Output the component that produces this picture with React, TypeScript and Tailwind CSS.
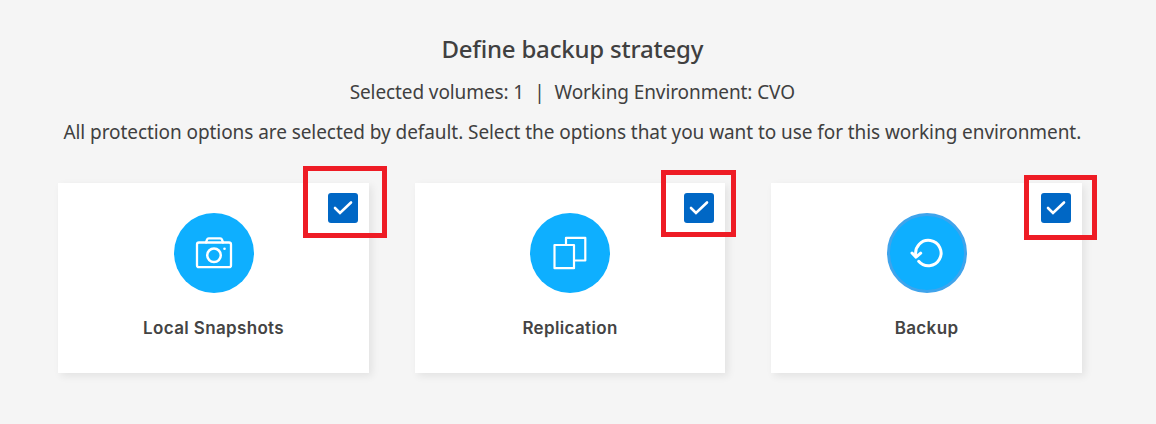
import type { ReactNode } from "react";

const CameraIcon = () => (
  <svg width="38" height="34" viewBox="0 0 38 34" fill="none" stroke="white" strokeWidth="2.300" strokeLinejoin="round" strokeLinecap="round">
    <rect x="2" y="6.500" width="34" height="24.700" rx="2" />
    <path d="M11 6.500l1-2.800c.3-.9.8-1.300 1.700-1.300h11.600c.9 0 1.400.4 1.700 1.300l1 2.800" />
    <circle cx="19" cy="19.300" r="6.800" strokeWidth="2.500" />
    <circle cx="29.500" cy="12.700" r="1.300" fill="white" stroke="none" />
  </svg>
);

const CopyIcon = () => (
  <svg width="34" height="34" viewBox="0 0 34 34" fill="none" stroke="white" strokeWidth="2.200" strokeLinejoin="round" strokeLinecap="round">
    <rect x="1.500" y="9" width="19.500" height="23.200" />
    <path d="M13 9V1.800h19.300v22.700H21" />
  </svg>
);

const RestoreIcon = () => (
  <svg width="34" height="34" viewBox="0 0 34 34" fill="none" stroke="white" strokeWidth="3" strokeLinecap="round" strokeLinejoin="round">
    <path d="M5.900 19.500A12.700 12.700 0 1 1 8.700 25.300" />
    <path d="M2 17l4 4.200 4.700-4" />
  </svg>
);

type Option = { label: string; icon: ReactNode; circle: string; marker: string };

const options: Option[] = [
  { label: "Local Snapshots", icon: <CameraIcon />, circle: "", marker: "left-[244.700px] top-[-17px] h-[72px] w-[84px]" },
  { label: "Replication", icon: <CopyIcon />, circle: "", marker: "left-[246.300px] top-[-13px] h-[67px] w-[75px]" },
  { label: "Backup", icon: <RestoreIcon />, circle: "border-[3px] border-[#3fa4ec]", marker: "left-[252.700px] top-[-8px] h-[65px] w-[73px]" },
];

function Card({ label, icon, circle, marker }: Option) {
  return (
    <div className="relative flex h-[190px] w-[310.500px] flex-col items-center bg-white pt-[30px] shadow-[3px_3px_8px_rgba(0,0,0,0.08)]">
      <div className={`flex size-20 items-center justify-center rounded-full bg-[#0eafff] ${circle}`}>{icon}</div>
      <div className="mt-[23px] font-[Inter,sans-serif] text-[17px] leading-6 font-semibold tracking-[0.350px] text-[#444444]">{label}</div>
      <div className="absolute top-[10px] right-[11px] flex size-[30px] items-center justify-center rounded-[3px] bg-[#0067c5]" role="checkbox" aria-checked="true" aria-label={label}>
        <svg width="20" height="16" viewBox="0 0 20 16" fill="none" stroke="white" strokeWidth="2.600" strokeLinecap="round">
          <path d="M2 8l5 5L18 2.500" />
        </svg>
      </div>
      <div className={`absolute z-10 border-[5px] border-[#ee1c25] ${marker}`} />
    </div>
  );
}

export default function App() {
  return (
    <main className="flex h-[424px] w-[1156px] flex-col bg-[#f5f5f5] pl-[58.300px] font-['Noto_Sans',sans-serif] text-[#404040]">
      <header className="flex w-[1028px] flex-col items-center whitespace-nowrap pt-[32px]">
        <h1 className="text-[24px] leading-[34px] font-medium tracking-[-0.200px]">Define backup strategy</h1>
        <p className="mt-[12px] flex text-[19px] leading-[28px] tracking-[-0.100px]">
          <span>Selected volumes: 1</span>
          <span className="mx-[10px]">|</span>
          <span>Working Environment: CVO</span>
        </p>
        <p className="mt-[12px] text-[19px] leading-[28px] tracking-[-0.070px]">
          All protection options are selected by default. Select the options that you want to use for this working environment.
        </p>
      </header>
      <section className="mt-[37px] flex gap-[46px]">
        {options.map((option) => (
          <Card key={option.label} {...option} />
        ))}
      </section>
    </main>
  );
}
